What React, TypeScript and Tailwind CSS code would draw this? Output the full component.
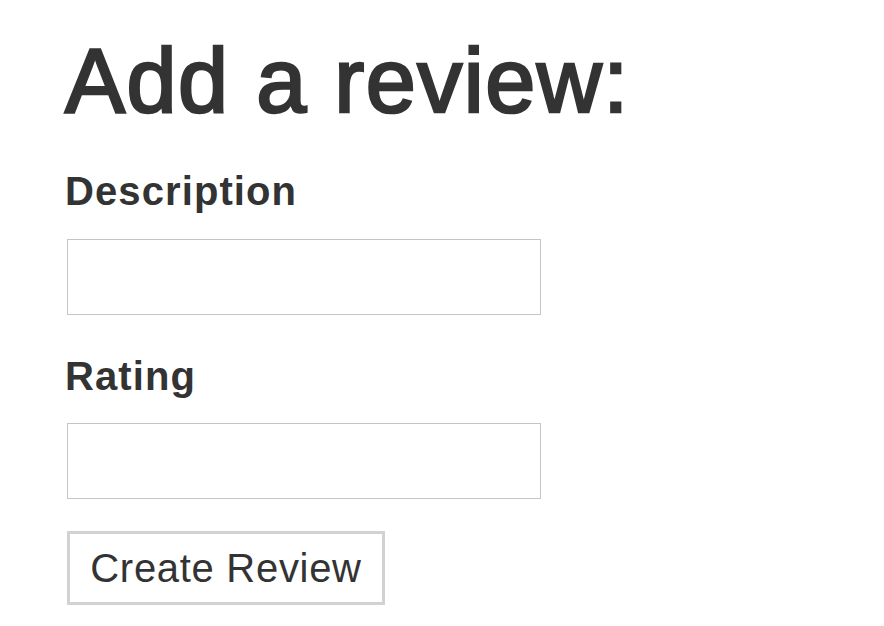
export default function App() {
  return (
    <div
      className="min-h-screen bg-white pl-[65px] pt-[36px] text-[#333333]"
      style={{ fontFamily: '"Liberation Sans", Arial, Helvetica, sans-serif' }}
    >
      <h1 className="text-[90px] leading-[90px] tracking-[1.5px] [-webkit-text-stroke:2.6px_#333333]">
        Add a review:
      </h1>
      <form className="mt-[45px] flex flex-col items-start" onSubmit={(e) => e.preventDefault()}>
        <label htmlFor="description" className="text-[40px] font-bold leading-[40px] tracking-[1.1px]">
          Description
        </label>
        <input
          id="description"
          type="text"
          className="ml-[2px] mt-[28px] h-[76px] w-[474px] border border-[#c4c4c4] bg-white px-2 text-[40px] outline-none"
        />
        <label htmlFor="rating" className="mt-[41px] text-[40px] font-bold leading-[40px] tracking-[1.1px]">
          Rating
        </label>
        <input
          id="rating"
          type="text"
          className="ml-[2px] mt-[27px] h-[76px] w-[474px] border border-[#c4c4c4] bg-white px-2 text-[40px] outline-none"
        />
        <button
          type="submit"
          className="ml-[2px] mt-[32px] flex h-[74px] w-[318px] items-center justify-center border-[3px] border-[#d2d2d2] bg-white text-[40px] tracking-[0.7px] text-[#333333]"
        >
          Create Review
        </button>
      </form>
    </div>
  )
}
